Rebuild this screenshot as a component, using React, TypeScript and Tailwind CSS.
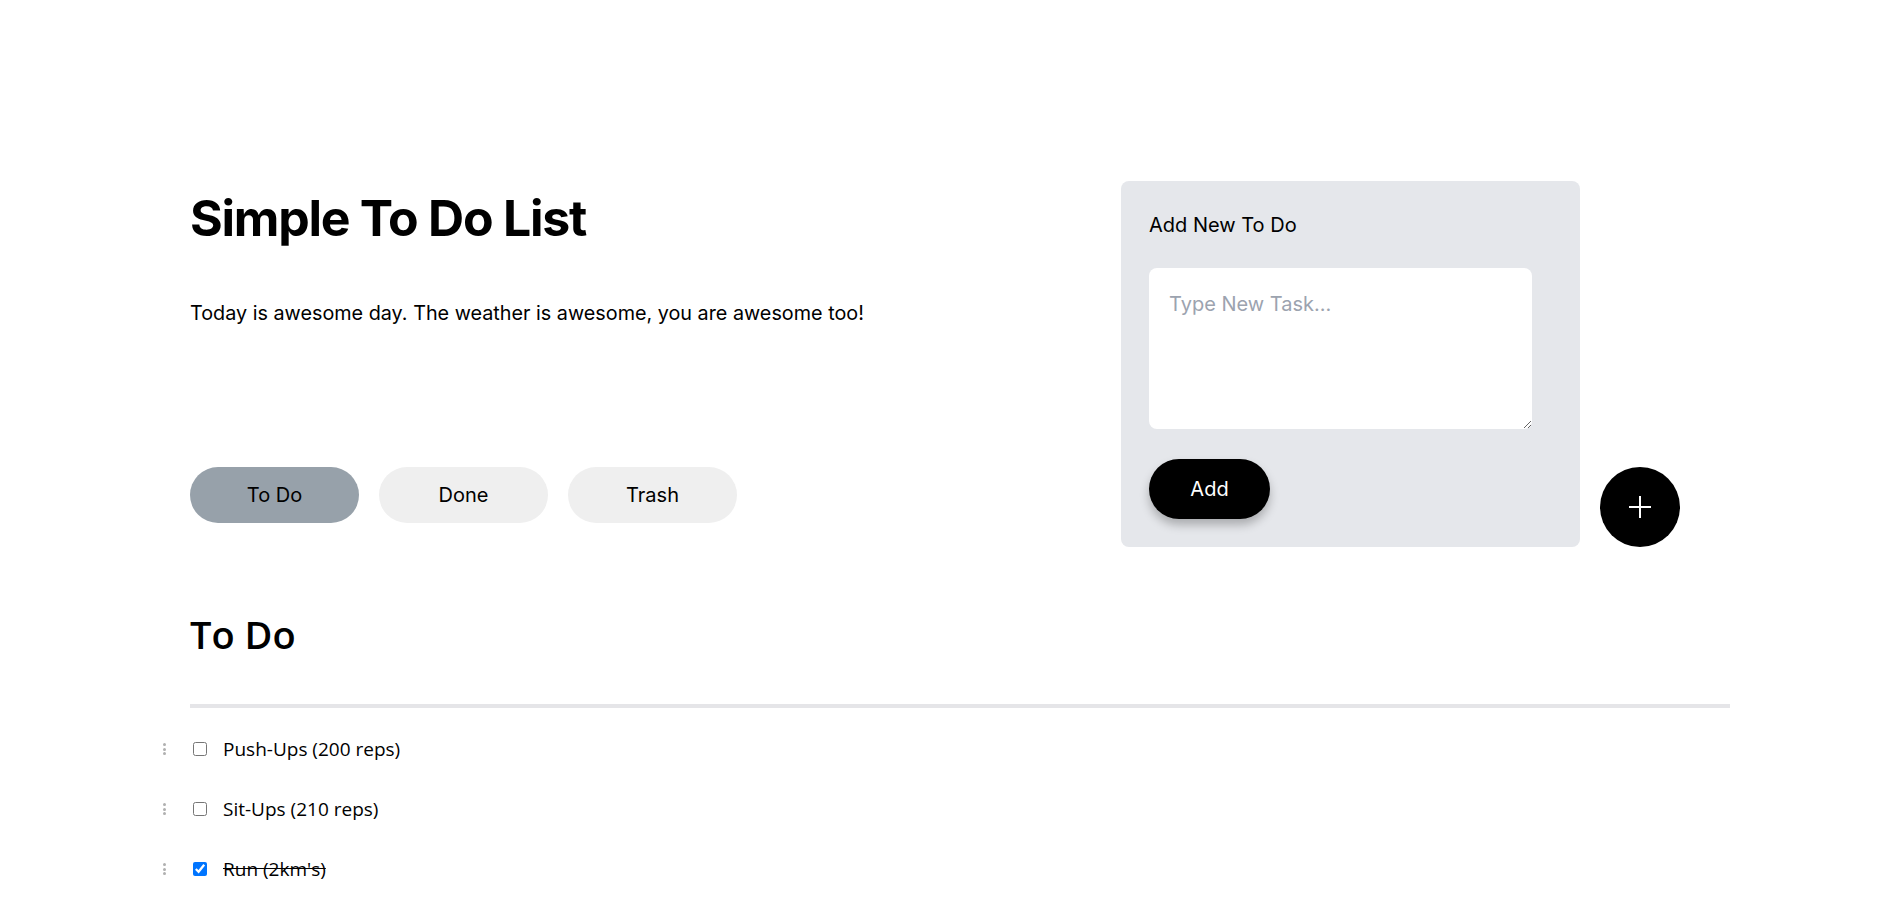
import React from "react";

const inter = { fontFamily: "Inter, 'Liberation Sans', sans-serif" };

function Handle() {
  return (
    <div className="flex w-[4px] flex-col items-center gap-[1.5px]">
      <span className="block h-[3px] w-[3px] rounded-full bg-[#b0b0b0]" />
      <span className="block h-[3px] w-[3px] rounded-full bg-[#b0b0b0]" />
      <span className="block h-[3px] w-[3px] rounded-full bg-[#b0b0b0]" />
    </div>
  );
}

function Row({ label, done }: { label: string; done?: boolean }) {
  return (
    <div className="ml-[-28px] flex h-[60px] items-center">
      <Handle />
      <input
        type="checkbox"
        defaultChecked={done}
        className="ml-[27px] m-0 h-[14px] w-[14px] accent-[#0075ff]"
      />
      <span
        className={
          "ml-[16px] text-[19px] text-black font-['Open_Sans',sans-serif] " +
          (done ? "line-through" : "")
        }
      >
        {label}
      </span>
    </div>
  );
}

export default function App() {
  return (
    <div className="min-h-screen bg-white text-black" style={inter}>
      <div className="ml-[190px] w-[1540px] pt-[181px]">
        <div className="flex">
          <div className="mt-[12px] w-[931px]">
            <h1 className="text-[50px] leading-none font-bold tracking-tight text-black font-['Inter',sans-serif]">
              Simple To Do List
            </h1>
            <p className="mt-[56px] text-[19.8px] leading-[28px] font-['Inter',sans-serif]">
              Today is awesome day. The weather is awesome, you are awesome too!
            </p>
            <div className="mt-[140px] flex gap-5">
              <button className="h-[56px] w-[169px] rounded-full bg-[#97a1aa] text-xl text-black font-['Inter',sans-serif]">
                To Do
              </button>
              <button className="h-[56px] w-[169px] rounded-full bg-[#efefef] text-xl text-black font-['Inter',sans-serif]">
                Done
              </button>
              <button className="h-[56px] w-[169px] rounded-full bg-[#efefef] text-xl text-black font-['Inter',sans-serif]">
                Trash
              </button>
            </div>
          </div>
          <div className="flex items-end gap-5">
            <div className="w-[459px] rounded-lg bg-[#e5e7eb] px-[28px] pt-[30px] pb-[28px]">
              <div className="text-xl leading-[28px] font-['Inter',sans-serif]">Add New To Do</div>
              <textarea
                placeholder="Type New Task..."
                className="mt-[29px] block h-[161px] w-[383px] rounded-lg bg-white px-5 pt-[22px] pb-5 text-xl leading-[28px] outline-none placeholder:text-[#9ca3af] font-['Inter',sans-serif]"
              />
              <button className="mt-[30px] h-[60px] w-[121px] rounded-full bg-black text-xl text-white shadow-[0_6px_10px_rgba(0,0,0,0.25)] font-['Inter',sans-serif]">
                Add
              </button>
            </div>
            <button className="flex h-[80px] w-[80px] items-center justify-center rounded-full bg-black">
              <svg width="24" height="24" viewBox="0 0 24 24">
                <path d="M12 1v22M1 12h22" stroke="white" strokeWidth="2" />
              </svg>
            </button>
          </div>
        </div>

        <h2 className="mt-[68px] text-[38px] leading-none font-semibold font-['Open_Sans',sans-serif]">
          To Do
        </h2>
        <div className="mt-[51px] h-[4px] w-full bg-[#e5e5e8]" />
        <div className="mt-[11px]">
          <Row label="Push-Ups (200 reps)" />
          <Row label="Sit-Ups (210 reps)" />
          <Row label="Run (2km's)" done />
        </div>
      </div>
    </div>
  );
}
